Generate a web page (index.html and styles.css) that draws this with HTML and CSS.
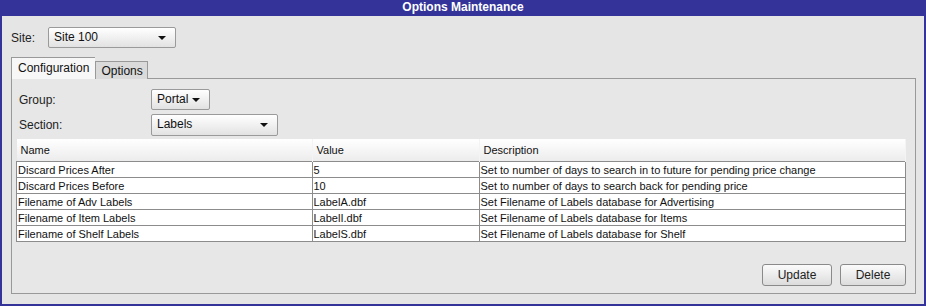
FILE: index.html
```html
<!DOCTYPE html>
<html lang="en">
<head>
    <meta charset="UTF-8">
    <title>Options Maintenance</title>
    <link rel="stylesheet" href="styles.css">
</head>
<body>
    <div class="window">
        <div class="titlebar">Options Maintenance</div>
        <div class="content">
            <div class="site-row">
                <span class="label site-label">Site:</span>
                <div class="combo combo-site">Site 100<span class="arrow"></span></div>
            </div>

            <div class="tabs">
                <div class="tab active">Configuration</div>
                <div class="tab">Options</div>
            </div>

            <div class="panel">
                <div class="form-row">
                    <span class="label">Group:</span>
                    <div class="combo combo-group">Portal<span class="arrow"></span></div>
                </div>
                <div class="form-row">
                    <span class="label">Section:</span>
                    <div class="combo combo-section">Labels<span class="arrow"></span></div>
                </div>

                <table class="grid">
                    <thead>
                        <tr>
                            <th class="col-name">Name</th>
                            <th class="col-value">Value</th>
                            <th class="col-desc">Description</th>
                        </tr>
                    </thead>
                    <tbody>
                        <tr><td>Discard Prices After</td><td>5</td><td>Set to number of days to search in to future for pending price change</td></tr>
                        <tr><td>Discard Prices Before</td><td>10</td><td>Set to number of days to search back for pending price</td></tr>
                        <tr><td>Filename of Adv Labels</td><td>LabelA.dbf</td><td>Set Filename of Labels database for Advertising</td></tr>
                        <tr><td>Filename of Item Labels</td><td>LabelI.dbf</td><td>Set Filename of Labels database for Items</td></tr>
                        <tr><td>Filename of Shelf Labels</td><td>LabelS.dbf</td><td>Set Filename of Labels database for Shelf</td></tr>
                    </tbody>
                </table>

                <div class="actions">
                    <button class="btn btn-update">Update</button>
                    <button class="btn btn-delete">Delete</button>
                </div>
            </div>
        </div>
    </div>
</body>
</html>
```

FILE: styles.css
```css
body {
    margin: 0;
    background-color: #e5e5e5;
    font-family: 'Liberation Sans', Arial, sans-serif;
}

.window {
    width: 926px;
    height: 306px;
    box-sizing: border-box;
    border: 2px solid #333399;
    border-top: none;
    background-color: #e5e5e5;
    display: flex;
    flex-direction: column;
}

.titlebar {
    height: 16px;
    line-height: 15px;
    margin: 0 -2px;
    background-color: #333399; /* navy title */
    color: #ffffff;
    font-size: 12px;
    font-weight: bold;
    text-align: center;
}

.content {
    flex: 1;
    display: flex;
    flex-direction: column;
    padding: 11px 8px 10px 9px;
}

.label {
    font-size: 12px;
    color: #222;
}

.site-row {
    display: flex;
    align-items: center;
    height: 21px;
}

.site-label {
    width: 37px;
}

.combo {
    position: relative;
    box-sizing: border-box;
    height: 21px;
    line-height: 19px;
    padding-left: 5px;
    border: 1px solid #9a9a9a;
    border-radius: 2px;
    background: linear-gradient(#ffffff, #e2e2e2);
    font-size: 12px;
    color: #111;
}

.arrow {
    position: absolute;
    right: 9px;
    top: 8px;
    border-left: 4px solid transparent;
    border-right: 4px solid transparent;
    border-top: 4px solid #111;
}

.combo-site {
    width: 128px;
}

.combo-group {
    width: 59px;
}

.combo-section {
    width: 127px;
    height: 22px;
}

.tabs {
    display: flex;
    align-items: flex-end;
    margin-top: 9px;
    height: 22px;
    position: relative;
    z-index: 1;
    margin-bottom: -1px;
}

.tab {
    box-sizing: border-box;
    height: 18px;
    padding: 0 4px 0 5px;
    line-height: 18px;
    border: 1px solid #999;
    border-bottom: none;
    background-color: #dadada;
    font-size: 12px;
    color: #111;
}

.tab.active {
    height: 22px;
    line-height: 21px;
    padding: 0 6px;
    background-color: #f7f7f7;
    border-right: none;
}

.panel {
    flex: 1;
    display: flex;
    flex-direction: column;
    border: 1px solid #999;
    background-color: #e7e7e7;
    padding: 10px 9px 7px 4px;
}

.form-row {
    display: flex;
    align-items: center;
    padding-left: 3px;
    margin-bottom: 4px;
}

.form-row .label {
    width: 132px;
}

.grid {
    border-collapse: collapse;
    width: 890px;
    margin-top: -1px;
    font-family: 'Liberation Sans', Tahoma, sans-serif;
    font-size: 11px;
    color: #111;
}

.grid th {
    height: 22px;
    padding: 0 0 0 4px;
    text-align: left;
    font-weight: normal;
    background: linear-gradient(#ffffff, #ececec);
    border-right: 1px solid #f4f4f4;
}

.grid th.col-name {
    width: 291px;
}

.grid th.col-value {
    width: 162px;
}

.grid td {
    height: 15px;
    padding: 0 0 0 1px;
    background-color: #ffffff;
    border: 1px solid #8c8c8c;
    white-space: nowrap;
}

.actions {
    margin-top: auto;
    display: flex;
    justify-content: flex-end;
    gap: 8px;
}

.btn {
    box-sizing: border-box;
    height: 22px;
    border: 1px solid #8a8a8a;
    border-radius: 3px;
    background: linear-gradient(#fbfbfb, #dcdcdc);
    font-family: 'Liberation Sans', Arial, sans-serif;
    font-size: 12px;
    color: #222;
    padding: 0;
}

.btn-update {
    width: 70px;
}

.btn-delete {
    width: 66px;
}
```
